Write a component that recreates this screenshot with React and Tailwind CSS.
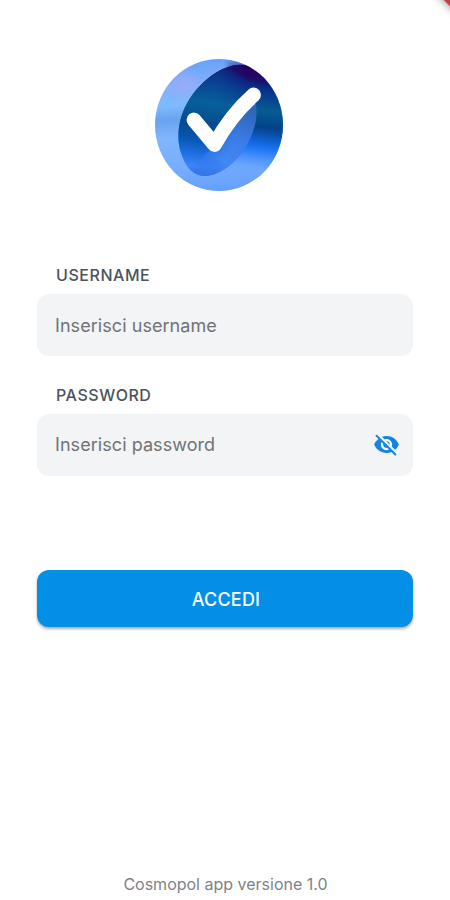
import { useState } from "react";
import { MdVisibilityOff, MdVisibility } from "react-icons/md";

function Logo() {
  return (
    <svg width="150" height="150" viewBox="0 0 150 150" role="img">
      <defs>
        <clipPath id="disc">
          <ellipse cx="74" cy="75" rx="64" ry="66" />
        </clipPath>
        <linearGradient id="light" gradientUnits="userSpaceOnUse" x1="55" y1="9" x2="65" y2="141">
          <stop offset="0" stopColor="#66a2fa" />
          <stop offset="0.2" stopColor="#86b0fa" />
          <stop offset="0.34" stopColor="#7dbbfc" />
          <stop offset="0.44" stopColor="#6aa2f0" />
          <stop offset="0.58" stopColor="#80b6fc" />
          <stop offset="0.8" stopColor="#78adfe" />
          <stop offset="1" stopColor="#66a0fe" />
        </linearGradient>
        <linearGradient id="deep" gradientUnits="userSpaceOnUse" x1="108" y1="10" x2="92" y2="130">
          <stop offset="0" stopColor="#240050" />
          <stop offset="0.12" stopColor="#1a0a68" />
          <stop offset="0.23" stopColor="#08308a" />
          <stop offset="0.4" stopColor="#065b93" />
          <stop offset="0.54" stopColor="#044288" />
          <stop offset="0.63" stopColor="#0b5bc8" />
          <stop offset="0.71" stopColor="#1b74f2" />
          <stop offset="0.79" stopColor="#478ffd" />
          <stop offset="0.87" stopColor="#6ba5fe" />
          <stop offset="1" stopColor="#6ba5fe" stopOpacity="0" />
        </linearGradient>
        <linearGradient id="inner" gradientUnits="userSpaceOnUse" x1="78" y1="12" x2="64" y2="127">
          <stop offset="0" stopColor="#12207a" />
          <stop offset="0.15" stopColor="#0a3c90" />
          <stop offset="0.36" stopColor="#06609b" />
          <stop offset="0.56" stopColor="#064a90" />
          <stop offset="0.7" stopColor="#0759b4" />
          <stop offset="0.82" stopColor="#1f70e4" />
          <stop offset="0.92" stopColor="#3c86f8" />
          <stop offset="1" stopColor="#2f70e4" />
        </linearGradient>
        <linearGradient id="shine" gradientUnits="userSpaceOnUse" x1="108" y1="60" x2="72" y2="124">
          <stop offset="0" stopColor="#2d66b4" />
          <stop offset="0.45" stopColor="#3b7ce8" />
          <stop offset="0.8" stopColor="#4288f8" />
          <stop offset="1" stopColor="#3877ea" />
        </linearGradient>
        <linearGradient id="shineEdge" gradientUnits="userSpaceOnUse" x1="48" y1="92" x2="84" y2="104">
          <stop offset="0" stopColor="#fff" stopOpacity="0" />
          <stop offset="1" stopColor="#fff" />
        </linearGradient>
        <mask id="shineMask">
          <rect width="150" height="150" fill="url(#shineEdge)" />
        </mask>
        <linearGradient id="innerFade" gradientUnits="userSpaceOnUse" x1="74" y1="0" x2="104" y2="0">
          <stop offset="0" stopColor="#fff" />
          <stop offset="1" stopColor="#fff" stopOpacity="0" />
        </linearGradient>
        <mask id="fade">
          <rect width="150" height="150" fill="url(#innerFade)" />
        </mask>
        <radialGradient id="violet" gradientUnits="userSpaceOnUse" cx="0" cy="0" r="1" gradientTransform="translate(106 23) rotate(22) scale(30 9)">
          <stop offset="0" stopColor="#2c0067" />
          <stop offset="1" stopColor="#20005c" stopOpacity="0" />
        </radialGradient>
        <radialGradient id="lilac" gradientUnits="userSpaceOnUse" cx="39" cy="34" r="18">
          <stop offset="0" stopColor="#9dabf9" stopOpacity="0.8" />
          <stop offset="1" stopColor="#9dabf9" stopOpacity="0" />
        </radialGradient>
      </defs>
      <g clipPath="url(#disc)">
        <rect width="150" height="150" fill="url(#light)" />
        <rect width="150" height="150" fill="url(#lilac)" />
        <path d="M98 15C94 45 80 100 64 126L64 145H145V10Z" fill="url(#deep)" />
        <path d="M98 15C82 13 62 26 48 44C35 61 30 84 36 103C41 119 50 127 62 126C80 123 93 110 102 95C110 80 114 66 110 50Z" fill="url(#deep)" />
        <path mask="url(#fade)" d="M98 15C82 13 62 26 48 44C35 61 30 84 36 103C41 119 50 127 62 126C80 123 93 110 102 95L108 45Z" fill="url(#inner)" />
        <path mask="url(#shineMask)" d="M110 50C114 66 110 80 102 95C93 110 80 123 62 126C55 126 50 124 46 120L69.5 94.5Q86 65 110 50Z" fill="url(#shine)" />
        <rect x="70" y="10" width="70" height="32" fill="url(#violet)" />
      </g>
      <path d="M49 70L69.5 94.5Q86 65 108.5 45" fill="none" stroke="white" strokeWidth="14.8" strokeLinecap="round" strokeLinejoin="round" />
    </svg>
  );
}

function Field({ label, placeholder, type = "text", inset = "", children }) {
  return (
    <label className="block">
      <span className="block h-[30px] pl-[19px] text-[16px] leading-[23px] font-medium tracking-[0.55px] text-[#4b535b]">
        {label}
      </span>
      <span className={`flex h-[62px] items-center rounded-[12px] bg-[#f2f4f6] pr-[13px] pl-[18px] ${inset}`}>
        <input
          type={type}
          placeholder={placeholder}
          className="min-w-0 flex-1 bg-transparent text-[18px] tracking-[0.06px] outline-none placeholder:text-[#707376]"
        />
        {children}
      </span>
    </label>
  );
}

export default function App() {
  const [visible, setVisible] = useState(false);
  const Eye = visible ? MdVisibility : MdVisibilityOff;
  return (
    <main className="relative flex h-[900px] w-[450px] flex-col overflow-hidden bg-white font-['Inter',sans-serif]">
      <div className="absolute -top-[31px] left-[441px] size-10 rotate-45 bg-[#b9444e] shadow-[0_0_8px_#0007]" />
      <header className="flex justify-center pt-[50px] pr-[10px]">
        <Logo />
      </header>
      <form className="flex flex-col px-[37px] pt-[64px]" onSubmit={(e) => e.preventDefault()}>
        <Field label="USERNAME" placeholder="Inserisci username" />
        <div className="mt-[28px]">
          <Field label="PASSWORD" placeholder="Inserisci password" type={visible ? "text" : "password"} inset="pb-[2px]">
            <button type="button" onClick={() => setVisible(!visible)}>
              <Eye size={27} color="#1583df" />
            </button>
          </Field>
        </div>
        <button className="mt-[94px] h-[57px] rounded-[12px] bg-[#038fe5] pt-[2px] pl-[2px] text-[18px] font-medium tracking-[0.2px] text-white shadow-[0_2px_3px_#0005]">
          ACCEDI
        </button>
      </form>
      <footer className="mt-auto pb-[4px] pl-px text-center text-[16px] leading-6 text-[#808285]">
        Cosmopol app versione 1.0
      </footer>
    </main>
  );
}
